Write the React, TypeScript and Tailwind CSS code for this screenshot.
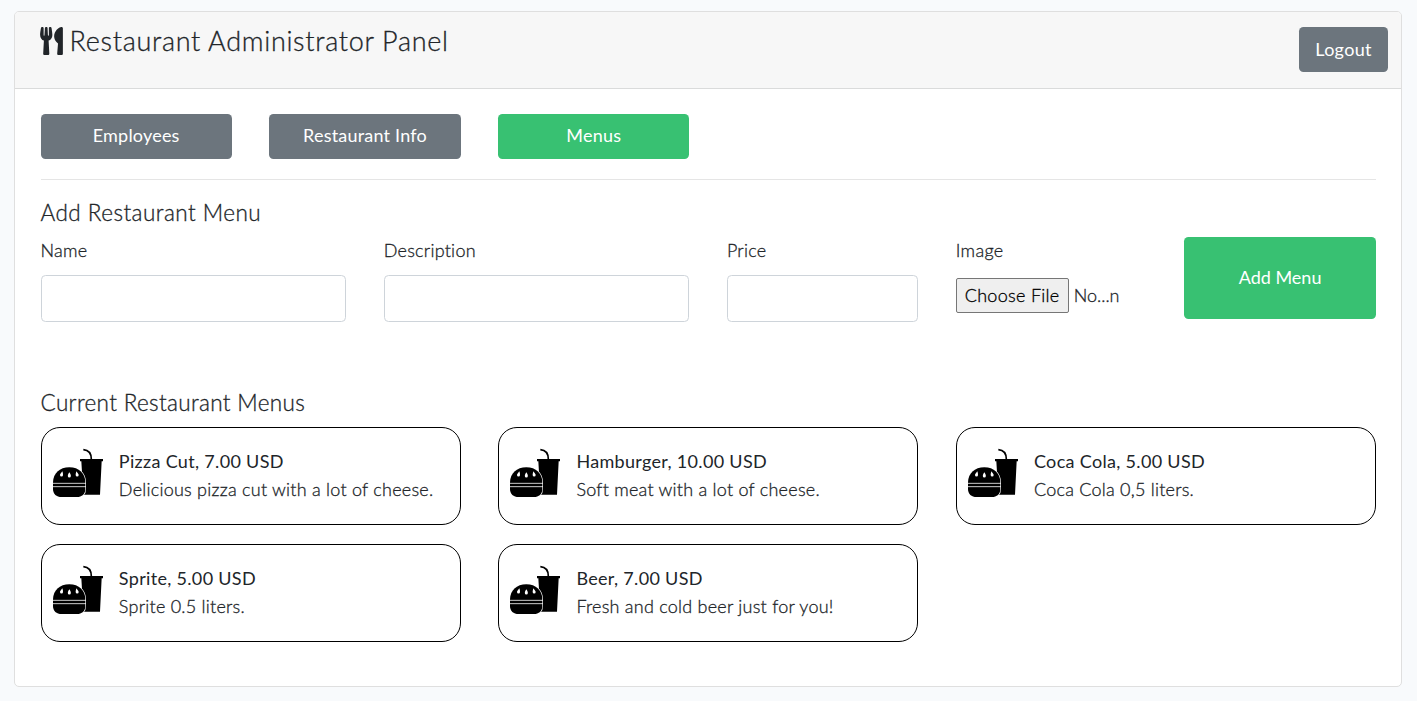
import { FaUtensils } from "react-icons/fa";

const menus = [
  { title: "Pizza Cut, 7.00 USD", text: "Delicious pizza cut with a lot of cheese." },
  { title: "Hamburger, 10.00 USD", text: "Soft meat with a lot of cheese." },
  { title: "Coca Cola, 5.00 USD", text: "Coca Cola 0,5 liters." },
  { title: "Sprite, 5.00 USD", text: "Sprite 0.5 liters." },
  { title: "Beer, 7.00 USD", text: "Fresh and cold beer just for you!" },
];

function MealIcon() {
  return (
    <svg viewBox="36 24 156 150" className="h-[50px] w-[52px] shrink-0" fill="#000">
      <path d="M130 29c14 1 24 9 24 29" fill="none" stroke="#000" strokeWidth="5" />
      <path d="M120 57h69v7h-4l-5 100h-50l-6-100h-4z" />
      <path
        d="M39 128c0-28 20-46 49-46s48 18 48 46v18c0 16-10 25-26 25H65c-16 0-26-9-26-25z"
        stroke="#fff"
        strokeWidth="4"
        paintOrder="stroke"
      />
      <path d="M37 130h101M37 140h101" stroke="#fff" strokeWidth="2.4" />
      <path
        d="M67 94c2 6 2 7 2 11a4.500 4.500 0 0 1-9 0c0-3 3-5 7-11zM88 97c3 5 4.500 7 4.500 11a4.500 4.500 0 0 1-9 0c0-4 1.500-6 4.500-11zM109 94c4 6 7 8 7 11a4.500 4.500 0 0 1-9 0c0-4 1-5 2-11z"
        fill="#fff"
      />
    </svg>
  );
}

function Tab({ label, active }: { label: string; active?: boolean }) {
  return (
    <button
      className={
        "col-span-2 h-[45px] rounded-[4.5px] pb-[3px] text-[18px] tracking-[0.2px] text-white " +
        (active ? "bg-[#38c172]" : "bg-[#6c757d]")
      }
    >
      {label}
    </button>
  );
}

function Field({ label, span }: { label: string; span: string }) {
  return (
    <label className={span + " block"}>
      <span className="block h-[38px] leading-[26px] font-light tracking-[0.25px] [-webkit-text-stroke:0.3px]">{label}</span>
      <input className="block h-[47px] w-full rounded-[4.5px] border border-[#ced4da] bg-white px-4 outline-none" />
    </label>
  );
}

export default function App() {
  return (
    <div className="h-[701px] bg-[#f8fafc] pt-[11px] pr-[15px] pl-[14px] font-['Lato',sans-serif] text-[18px] text-[#212529] [font-variant-ligatures:none]">
      <div className="h-[676px] overflow-hidden rounded-[5px] border border-[#dfdfdf] bg-white">
        <header className="flex h-[77px] justify-between border-b border-[#dadbdb] bg-[#f7f7f7] pt-[15px] pr-[13px] pl-[24.6px]">
          <h1 className="flex h-[28px] items-center gap-[7px] text-[27px] font-light tracking-[0.69px]">
            <FaUtensils className="h-[28px] w-[23px]" />
            <span className="[-webkit-text-stroke:0.3px]">Restaurant Administrator Panel</span>
          </h1>
          <button className="h-[45px] w-[89px] rounded-[4.5px] bg-[#6c757d] text-[18px] tracking-[0.3px] text-white">Logout</button>
        </header>
        <main className="pt-[25px] pr-[25.3px] pl-[25.55px]">
          <nav className="grid grid-cols-12 gap-x-[37.5px]">
            <Tab label="Employees" />
            <Tab label="Restaurant Info" />
            <Tab label="Menus" active />
          </nav>
          <hr className="mt-[20px] border-[#e5e5e5]" />
          <h2 className="mt-[19px] h-[38px] text-[22.5px] leading-[28px] font-light tracking-[0.46px] [-webkit-text-stroke:0.3px]">Add Restaurant Menu</h2>
          <form className="grid h-[152px] grid-cols-12 items-start gap-x-[37.5px]" onSubmit={(e) => e.preventDefault()}>
            <Field label="Name" span="col-span-3" />
            <Field label="Description" span="col-span-3" />
            <Field label="Price" span="col-span-2" />
            <div className="col-span-2">
              <div className="h-[41px] leading-[26px] font-light tracking-[0.35px] [-webkit-text-stroke:0.3px]">Image</div>
              <div className="flex items-center gap-[5px] font-light [-webkit-text-stroke:0.3px]">
                <button type="button" className="h-[35px] w-[113px] rounded-[2px] border border-[#767676] bg-[#efefef] tracking-[0.3px] text-black">
                  Choose File
                </button>
                <span>No...n</span>
              </div>
            </div>
            <button className="col-span-2 h-[82px] rounded-[4.5px] bg-[#38c172] pb-[2px] text-white">Add Menu</button>
          </form>
          <h2 className="h-[38px] text-[22.5px] leading-[28px] font-light tracking-[0.34px] [-webkit-text-stroke:0.3px]">Current Restaurant Menus</h2>
          <section className="grid grid-cols-3 gap-x-[37.5px] gap-y-[19px]">
            {menus.map((m) => (
              <article key={m.title} className="flex h-[98px] items-start rounded-[19px] border border-black pt-[20px] pl-[10.3px]">
                <MealIcon />
                <div className="-mt-px ml-[15px] leading-[28px]">
                  <div className="tracking-[0.32px]">{m.title}</div>
                  <div className="font-light tracking-[0.24px] [-webkit-text-stroke:0.3px]">{m.text}</div>
                </div>
              </article>
            ))}
          </section>
        </main>
      </div>
    </div>
  );
}
